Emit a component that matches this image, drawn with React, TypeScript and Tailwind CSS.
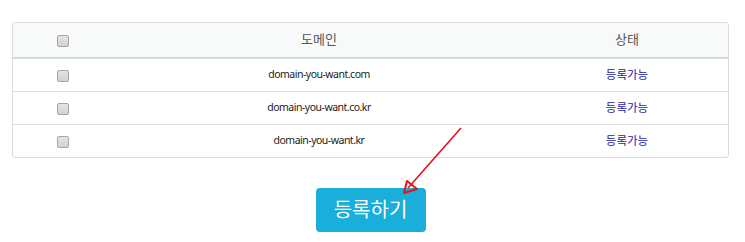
const rows = ["domain-you-want.com", "domain-you-want.co.kr", "domain-you-want.kr"];

function Check() {
  return (
    <span className="inline-block size-[12px] rounded-[2px] border border-[#a6a6a6] bg-gradient-to-b from-[#e4e4e4] to-[#d2d2d2] align-middle" />
  );
}

export default function App() {
  return (
    <div className="relative h-[242px] w-[745px] bg-white font-['Noto_Sans','Noto_Sans_CJK_KR',sans-serif]">
      <div className="ml-[12px] w-[717px] pt-[22px]">
        <div className="overflow-hidden rounded-[3px] border border-[#dcdcdc]">
          <table className="w-full border-collapse">
            <thead>
              <tr className="h-[35px] border-b-2 border-[#d6dcdc] bg-[#f8f9f9] text-[13px] text-[#555]">
                <th className="w-[99px] font-normal">
                  <Check />
                </th>
                <th className="w-[414px] font-normal">도메인</th>
                <th className="font-normal">상태</th>
              </tr>
            </thead>
            <tbody>
              {rows.map((d, i) => (
                <tr
                  key={d}
                  className={
                    "h-[33px] text-center " + (i < rows.length - 1 ? "border-b border-[#dedede]" : "")
                  }
                >
                  <td>
                    <Check />
                  </td>
                  <td className="text-[10.5px] tracking-[-0.5px] text-[#222]">{d}</td>
                  <td className="text-[11.5px] text-[#1c1ca8]">등록가능</td>
                </tr>
              ))}
            </tbody>
          </table>
        </div>
        <div className="mt-[30px] flex justify-center">
          <button className="h-[44px] w-[110px] rounded-[4px] bg-[#1aaedb] text-[20px] text-white">
            등록하기
          </button>
        </div>
      </div>
      <svg className="absolute left-0 top-0" width="745" height="242">
        <line x1="461" y1="128" x2="408" y2="188" stroke="#e8101a" strokeWidth="1.6" />
        <polygon points="404,193 407,181 417,189" fill="none" stroke="#e8101a" strokeWidth="2" strokeLinejoin="round" />
      </svg>
    </div>
  );
}
